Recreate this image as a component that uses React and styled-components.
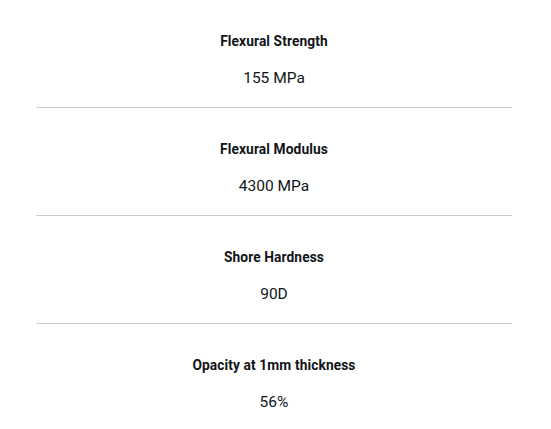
import React from "react";
import styled, { createGlobalStyle } from "styled-components";

const Global = createGlobalStyle`
  html, body { margin: 0; padding: 0; background: #fff; }
  body { font-family: Roboto, "Noto Sans", Arial, sans-serif; color: #111418; }
`;

const List = styled.div`
  width: 476px;
  margin-left: 36px;
  display: flex;
  flex-direction: column;
`;

const Spec = styled.div`
  display: flex;
  flex-direction: column;
  align-items: center;
  padding: 31px 0 19px;
  gap: 17px;
  border-bottom: ${(p) => (p.$last ? "none" : "1px solid #cccccc")};
`;

const Label = styled.div`
  font-size: 13.75px;
  font-weight: 700;
  line-height: 20px;
  letter-spacing: 0.1px;
`;

const Value = styled.div`
  font-size: 15.5px;
  font-weight: 400;
  line-height: 20px;
`;

const specs = [
  ["Flexural Strength", "155 MPa"],
  ["Flexural Modulus", "4300 MPa"],
  ["Shore Hardness", "90D"],
  ["Opacity at 1mm thickness", "56%"],
];

export default function App() {
  return (
    <>
      <Global />
      <List>
        {specs.map(([l, v], i) => (
          <Spec key={l} $last={i === specs.length - 1}>
            <Label>{l}</Label>
            <Value>{v}</Value>
          </Spec>
        ))}
      </List>
    </>
  );
}
